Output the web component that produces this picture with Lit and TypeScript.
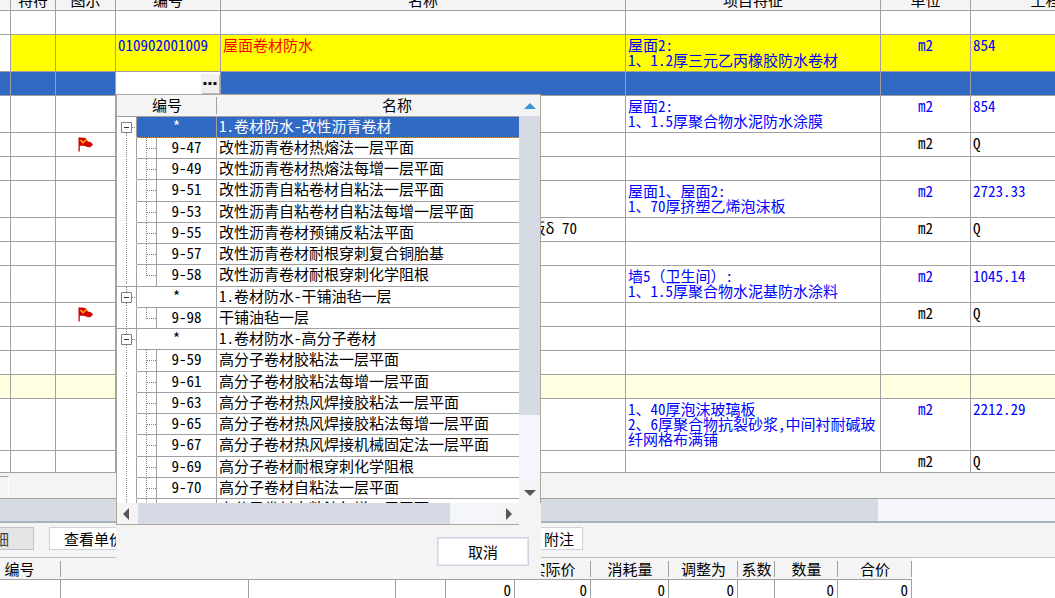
import { LitElement, html, css, svg, nothing } from "lit";
import { customElement, property } from "lit/decorators.js";

interface QuotaRow {
  kind?: "tall" | "notes" | "last";
  tone?: "yellow" | "selected" | "pale";
  flag?: boolean;
  code?: string;
  name?: string;
  tail?: string;
  feature?: string;
  unit?: string;
  expr?: string;
  blue?: boolean;
  editing?: boolean;
}

const ROWS: QuotaRow[] = [
  {},
  { kind: "tall", tone: "yellow", code: "010902001009", name: "屋面卷材防水", feature: "屋面2:\n1、1.2厚三元乙丙橡胶防水卷材", unit: "m2", expr: "854", blue: true },
  { tone: "selected", editing: true },
  { kind: "tall", feature: "屋面2:\n1、1.5厚聚合物水泥防水涂膜", unit: "m2", expr: "854", blue: true },
  { flag: true, unit: "m2", expr: "Q" },
  {},
  { kind: "tall", feature: "屋面1、屋面2:\n1、70厚挤塑乙烯泡沫板", unit: "m2", expr: "2723.33", blue: true },
  { tail: "板δ 70", unit: "m2", expr: "Q" },
  {},
  { kind: "tall", feature: "墙5（卫生间）:\n1、1.5厚聚合物水泥基防水涂料", unit: "m2", expr: "1045.14", blue: true },
  { flag: true, unit: "m2", expr: "Q" },
  {},
  {},
  { tone: "pale" },
  { kind: "notes", feature: "1、40厚泡沫玻璃板\n2、6厚聚合物抗裂砂浆,中间衬耐碱玻\n纤网格布满铺", unit: "m2", expr: "2212.29", blue: true },
  { kind: "last", unit: "m2", expr: "Q" },
];

interface TreeRow {
  code: string;
  name: string;
  group?: boolean;
  last?: boolean;
}

const TREE: TreeRow[] = [
  { code: "*", name: "1.卷材防水-改性沥青卷材", group: true },
  { code: "9-47", name: "改性沥青卷材热熔法一层平面" },
  { code: "9-49", name: "改性沥青卷材热熔法每增一层平面" },
  { code: "9-51", name: "改性沥青自粘卷材自粘法一层平面" },
  { code: "9-53", name: "改性沥青自粘卷材自粘法每增一层平面" },
  { code: "9-55", name: "改性沥青卷材预铺反粘法平面" },
  { code: "9-57", name: "改性沥青卷材耐根穿刺复合铜胎基" },
  { code: "9-58", name: "改性沥青卷材耐根穿刺化学阻根", last: true },
  { code: "*", name: "1.卷材防水-干铺油毡一层", group: true },
  { code: "9-98", name: "干铺油毡一层", last: true },
  { code: "*", name: "1.卷材防水-高分子卷材", group: true },
  { code: "9-59", name: "高分子卷材胶粘法一层平面" },
  { code: "9-61", name: "高分子卷材胶粘法每增一层平面" },
  { code: "9-63", name: "高分子卷材热风焊接胶粘法一层平面" },
  { code: "9-65", name: "高分子卷材热风焊接胶粘法每增一层平面" },
  { code: "9-67", name: "高分子卷材热风焊接机械固定法一层平面" },
  { code: "9-69", name: "高分子卷材耐根穿刺化学阻根" },
  { code: "9-70", name: "高分子卷材自粘法一层平面" },
  { code: "", name: "高分子卷材自粘法每增一层平面" },
];

const base = css`
  * {
    box-sizing: border-box;
  }
  table {
    border-collapse: separate;
    border-spacing: 0;
    table-layout: fixed;
  }
  th,
  td {
    padding: 0;
    font-weight: 400;
    overflow: hidden;
    white-space: nowrap;
  }
  button,
  input {
    font: inherit;
    font-feature-settings: inherit;
    color: inherit;
    margin: 0;
    padding: 0;
    border: 0;
    border-radius: 0;
    outline: 0;
    white-space: nowrap;
  }
`;

const flagIcon = svg`<svg class="flag" viewBox="0 0 15 15" width="15" height="15" aria-hidden="true">
  <path d="M0.500 0.500h1.300v14H0.500z" fill="#d40000"/>
  <path d="M1 0.800C3.500 0 6 .4 8.200 1.600L9.800 4.600 12.500 5 14.900 7.200C14 9.800 11.500 10.800 9.400 10 7 9.200 4.500 8.400 1 9.200z" fill="#d40000"/>
  <path d="M2.400 3 5 5.800 8.800 2.200" fill="none" stroke="#ffb400" stroke-width="1.400"/>
</svg>`;

@customElement("quota-grid")
export class QuotaGrid extends LitElement {
  static styles = [
    base,
    css`
      :host {
        display: block;
        overflow: hidden;
      }
      .grid {
        width: 100%;
        min-width: 1181px;
        margin-top: -11px;
        background: #fff;
      }
      .c0 { width: 11px; }
      .c1 { width: 45px; }
      .c2 { width: 60px; }
      .c3 { width: 105px; }
      .c4 { width: 405px; }
      .c5 { width: 255px; }
      .c6 { width: 90px; }
      th,
      td {
        border-right: 1px solid #a0a0a0;
        border-bottom: 1px solid #a0a0a0;
      }
      th {
        height: 22px;
        background: #f4f4f4;
        line-height: 20px;
      }
      td {
        height: 24px;
        padding: 2px 2px 0;
        vertical-align: top;
        line-height: 15px;
      }
      .tall td { height: 37px; }
      .notes td { height: 52px; }
      .last td { height: 22px; }
      .yellow td { background: #ff0; }
      .yellow td:first-child { background: #fff; }
      .selected td { background: #316ac5; }
      .pale td { background: #ffffe1; }
      .blue { color: #00f; }
      .name { color: #f00; }
      .mid { text-align: center; }
      .feature { white-space: pre; }
      .full { font-feature-settings: normal; }
      .tail {
        text-align: right;
        padding-right: 48px;
      }
      .selected .edit {
        padding: 0;
        background: #fff;
      }
      .editor {
        display: flex;
        height: 23px;
        padding: 2px 1px 2px 2px;
      }
      .editor input {
        flex: 1;
        min-width: 0;
        background: #fff;
      }
      .more {
        display: flex;
        align-items: center;
        justify-content: center;
        width: 18px;
        background: #f0f0f0;
        box-shadow: 1px 1px 0 #b8b8b8;
      }
      .flag {
        display: block;
        margin-left: 20px;
        margin-top: 2px;
      }
    `,
  ];

  private feature(text: string) {
    return text.split(/([（）])/).map((part) => (/[（）]/.test(part) ? html`<span class="full">${part}</span>` : part));
  }

  private row(r: QuotaRow) {
    const ink = r.blue ? "blue" : "";
    return html`<tr class="${r.kind ?? ""} ${r.tone ?? ""}">
      <td></td>
      <td></td>
      <td>${r.flag ? flagIcon : nothing}</td>
      ${r.editing
        ? html`<td class="edit">
            <div class="editor">
              <input type="text" aria-label="编号" />
              <button class="more" type="button" aria-label="选择">
                <svg width="14" height="3" viewBox="0 0 14 3" aria-hidden="true">
                  <path d="M0.500 0h3v3h-3zM5.500 0h3v3h-3zM10.500 0h3v3h-3z" fill="#111" />
                </svg>
              </button>
            </div>
          </td>`
        : html`<td class=${ink}>${r.code}</td>`}
      <td class=${r.tail ? "tail" : "name"}>${r.tail ?? r.name}</td>
      <td class="feature ${ink}">${this.feature(r.feature ?? "")}</td>
      <td class="mid ${ink}">${r.unit}</td>
      <td class=${ink}>${r.expr}</td>
    </tr>`;
  }

  render() {
    return html`<table class="grid">
      <colgroup>
        ${[0, 1, 2, 3, 4, 5, 6].map((i) => html`<col class="c${i}" />`)}
        <col />
      </colgroup>
      <thead>
        <tr>
          ${["", "特符", "图示", "编号", "名称", "项目特征", "单位", "工程量表达式"].map((t) => html`<th>${t}</th>`)}
        </tr>
      </thead>
      <tbody>
        ${ROWS.map((r) => this.row(r))}
      </tbody>
    </table>`;
  }
}

@customElement("quota-picker")
export class QuotaPicker extends LitElement {
  static styles = [
    base,
    css`
      :host {
        display: block;
        background: #f4f4f4;
        padding-bottom: 12px;
      }
      .body {
        display: grid;
        grid-template-columns: minmax(0, 1fr) 22px;
        grid-template-rows: 408px 22px;
        border-left: 1px solid #aca899;
        border-top: 1px solid #aca899;
      }
      .list {
        overflow: hidden;
        background: #fff;
      }
      table { width: 460px; }
      .g0, .g1 { width: 20px; }
      .g2 { width: 60px; }
      th {
        height: 22px;
        background: #f4f4f4;
        border-bottom: 1px solid #a0a0a0;
        line-height: 20px;
        vertical-align: top;
        position: relative;
      }
      th:first-child::after {
        content: "";
        position: absolute;
        right: 0;
        top: 2px;
        bottom: 2px;
        width: 1px;
        background: #a0a0a0;
      }
      td {
        height: 21px;
        line-height: 18px;
        vertical-align: top;
        border-right: 1px solid #a0a0a0;
        border-bottom: 1px solid #a0a0a0;
      }
      tr:nth-child(4n) td { height: 22px; }
      .gutter { border-bottom-color: transparent; }
      .close .gutter { border-bottom-color: #a0a0a0; }
      .code { text-align: center; }
      .label { padding-left: 2px; }
      .picked .code,
      .picked .label {
        background: #316ac5;
        color: #fff;
        border-bottom: 1px dotted #c8a050;
      }
      svg { display: block; }
      .toggle {
        display: block;
        width: 19px;
        height: 20px;
        background: none;
      }
      .vbar {
        display: grid;
        grid-template-rows: 21px 299px 1fr 21px;
        background: #f4f6fb;
        border-right: 1px solid #aca899;
      }
      .hbar {
        display: grid;
        grid-template-columns: 21px 312px 1fr 21px;
        background: #f4f6fb;
        border-bottom: 1px solid #aca899;
      }
      .arrow {
        display: flex;
        align-items: center;
        justify-content: center;
        background: #f4f4f4;
      }
      .thumb { background: #d6dae4; }
      .actions {
        display: flex;
        justify-content: flex-end;
        padding: 12px 12px 0;
      }
      .cancel {
        width: 92px;
        height: 29px;
        padding-bottom: 1px;
        background: #fff;
        border: 1px solid #d0d5e2;
        box-shadow: inset 0 0 0 1px #e4e7f0;
      }
    `,
  ];

  private gutter(r: TreeRow, first: boolean) {
    if (!r.group) {
      return html`<svg width="19" height="20" aria-hidden="true">
        <path d="M9.500 0v20" stroke="#808080" stroke-dasharray="1 1" fill="none" />
      </svg>`;
    }
    return html`<button class="toggle" type="button" aria-label="折叠">
      <svg width="19" height="20" aria-hidden="true">
        <path d="M9.500 ${first ? 16 : 0}V20M15 10.500h4" stroke="#808080" stroke-dasharray="1 1" fill="none" />
        <path d="M4.500 5.500h10v10h-10z" fill="#fff" stroke="#808080" />
        <path d="M7 10.500h5" stroke="#333" />
      </svg>
    </button>`;
  }

  private row(r: TreeRow, i: number) {
    const closes = TREE[i + 1]?.group ?? false;
    return html`<tr class="${i === 0 ? "picked" : ""} ${closes ? "close" : ""}">
      <td class="gutter">${this.gutter(r, i === 0)}</td>
      ${r.group
        ? html`<td class="code" colspan="2">${r.code}</td>`
        : html`<td class="branch">
              <svg width="19" height="20" aria-hidden="true">
                <path d="M9.500 0V${r.last ? 11 : 20}M10 10.500h9" stroke="#808080" stroke-dasharray="1 1" fill="none" />
              </svg>
            </td>
            <td class="code">${r.code}</td>`}
      <td class="label">${r.name}</td>
    </tr>`;
  }

  render() {
    return html`<div class="body">
        <div class="list">
          <table>
            <colgroup>
              <col class="g0" />
              <col class="g1" />
              <col class="g2" />
              <col />
            </colgroup>
            <thead>
              <tr>
                <th colspan="3">编号</th>
                <th>名称</th>
              </tr>
            </thead>
            <tbody>
              ${TREE.map((r, i) => this.row(r, i))}
            </tbody>
          </table>
        </div>
        <div class="vbar">
          <span class="arrow"><svg width="12" height="6" aria-hidden="true"><path d="M6 0 12 6H0z" fill="#3c96dc" /></svg></span>
          <span class="thumb"></span>
          <span></span>
          <span class="arrow"><svg width="12" height="6" aria-hidden="true"><path d="M0 0h12L6 6z" fill="#555" /></svg></span>
        </div>
        <div class="hbar">
          <span class="arrow"><svg width="10" height="12" aria-hidden="true"><path d="M6 0v12L0 6z" fill="#555" /></svg></span>
          <span class="thumb"></span>
          <span></span>
          <span class="arrow"><svg width="6" height="12" aria-hidden="true"><path d="M0 0v12l6-6z" fill="#555" /></svg></span>
        </div>
      </div>
      <div class="actions"><button class="cancel" type="button">取消</button></div>`;
  }
}

@customElement("cost-grid")
export class CostGrid extends LitElement {
  @property({ attribute: false }) widths = [83, 188, 147, 50, 69, 76, 78, 69, 37, 63, 74];

  static styles = [
    base,
    css`
      :host {
        display: block;
        overflow: hidden;
        background: #fff;
      }
      table {
        width: 934px;
        margin-left: -22px;
      }
      th {
        height: 22px;
        background: #f4f4f4;
        border-bottom: 1px solid #a0a0a0;
        line-height: 20px;
        position: relative;
      }
      th::after {
        content: "";
        position: absolute;
        right: 0;
        top: 3px;
        bottom: 2px;
        width: 1px;
        background: #a0a0a0;
      }
      td {
        height: 24px;
        padding-right: 3px;
        text-align: right;
        vertical-align: top;
        line-height: 20px;
        border-right: 1px solid #a0a0a0;
      }
    `,
  ];

  render() {
    const heads = ["编号", "", "", "", "", "实际价", "消耗量", "调整为", "系数", "数量", "合价"];
    const cells = ["", "", "", "", "0", "0", "0", "0", "", "0", "0"];
    return html`<table>
      <colgroup>
        ${this.widths.map((w) => html`<col style="width:${w}px" />`)}
      </colgroup>
      <thead>
        <tr>${heads.map((t) => html`<th>${t}</th>`)}</tr>
      </thead>
      <tbody>
        <tr>${cells.map((t) => html`<td>${t}</td>`)}</tr>
      </tbody>
    </table>`;
  }
}

@customElement("app-root")
export class AppRoot extends LitElement {
  static styles = [
    base,
    css`
      :host {
        display: flex;
        flex-direction: column;
        position: relative;
        height: 100vh;
        overflow: hidden;
        background: #f4f4f4;
        color: #000;
        font-family: "Noto Sans CJK SC", sans-serif;
        font-size: 15px;
        line-height: 15px;
        font-feature-settings: "hwid";
        text-spacing-trim: space-all;
      }
      .strip {
        height: 25px;
        padding-top: 3px;
      }
      .stub {
        width: 9px;
        height: 20px;
        border-top: 1px solid #a0a0a0;
        border-right: 1px solid #fff;
      }
      .scroll {
        height: 25px;
        border-top: 1px solid #a0a0a0;
        border-bottom: 2px solid #a3b4bd;
        background: #f4f6fb;
      }
      .thumb {
        width: 83.2%;
        height: 100%;
        background: #d6dae3;
      }
      .tabs {
        display: flex;
        align-items: center;
        height: 35px;
        padding-bottom: 3px;
        border-bottom: 1px solid #c0bcb0;
      }
      .tab {
        flex: none;
        height: 23px;
        padding: 0 8px 1px;
        background: #fff;
        border: 1px solid #ccd1de;
      }
      .detail {
        width: 80px;
        margin-left: -46px;
        padding-right: 24px;
        background: #e5e5e5;
        border-color: #bcc4ce;
        color: #444;
        text-align: right;
      }
      .unit {
        width: 120px;
        margin-left: 15px;
        padding-left: 14px;
        text-align: left;
      }
      .note { margin-left: 366px; }
      cost-grid { flex: 1; }
      quota-picker {
        position: absolute;
        left: 116px;
        top: 94px;
        width: 425px;
      }
    `,
  ];

  render() {
    return html`<quota-grid lang="zh-CN"></quota-grid>
      <div class="strip"><div class="stub"></div></div>
      <div class="scroll"><div class="thumb"></div></div>
      <nav class="tabs">
        <button class="tab detail" type="button">明细</button>
        <button class="tab unit" type="button">查看单价构成</button>
        <button class="tab note" type="button">附注</button>
      </nav>
      <cost-grid lang="zh-CN"></cost-grid>
      <quota-picker lang="zh-CN"></quota-picker>`;
  }
}
